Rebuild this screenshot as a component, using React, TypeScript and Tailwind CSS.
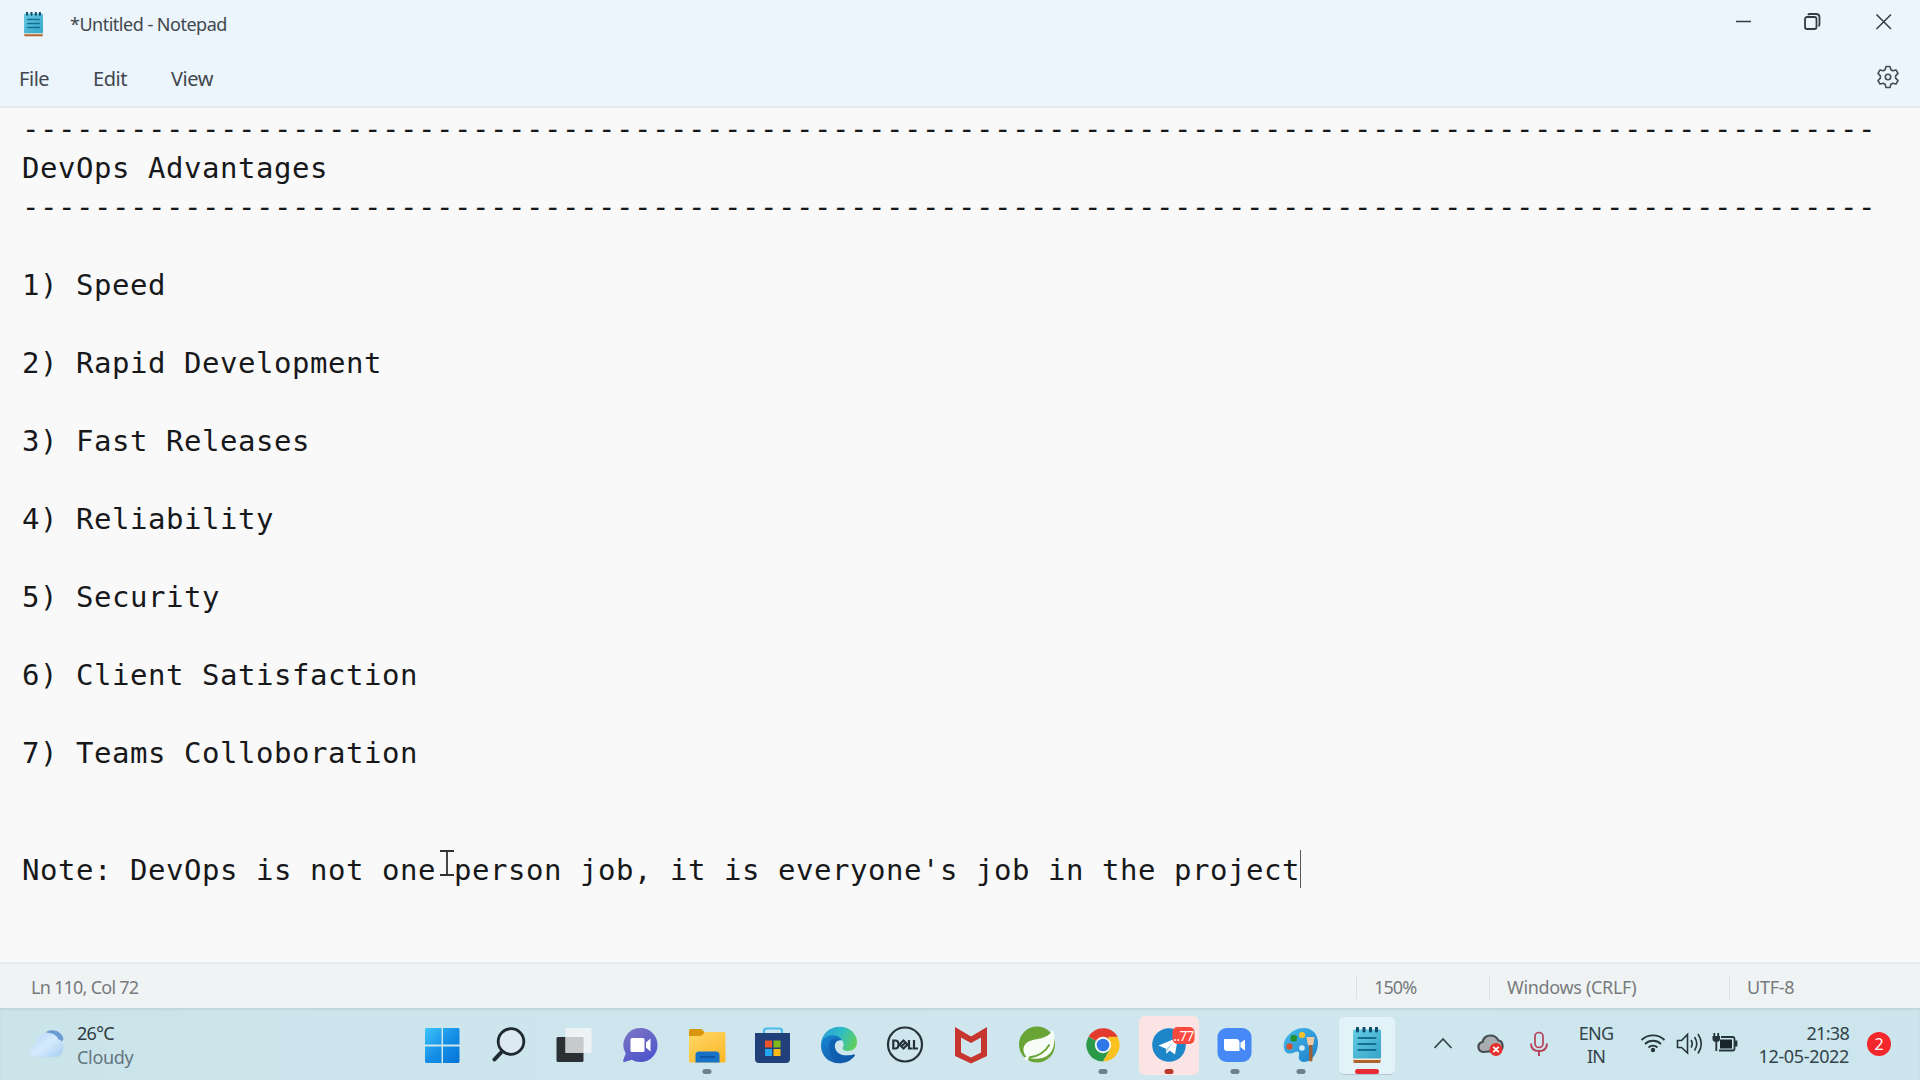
import type { ReactNode } from "react";

const RULE = "-".repeat(103);

const LINES = [
  RULE,
  "DevOps Advantages",
  RULE,
  "",
  "1) Speed",
  "",
  "2) Rapid Development",
  "",
  "3) Fast Releases",
  "",
  "4) Reliability",
  "",
  "5) Security",
  "",
  "6) Client Satisfaction",
  "",
  "7) Teams Colloboration",
  "",
  "",
];

function NotepadGlyph({ className }: { className: string }) {
  return (
    <svg className={className} viewBox="0 0 28 37">
      <rect x="0.5" y="31" width="27" height="5" rx="1" fill="#b0622c" />
      <rect x="0.5" y="31" width="27" height="2" fill="#f3ead8" />
      <rect x="0" y="2.5" width="28" height="29" rx="1.5" fill="url(#np)" />
      <path d="M5.5 11h17M5.5 17h17M5.5 23h17" stroke="#156f93" strokeWidth="2.2" strokeLinecap="round" />
      <path d="M4.5 1v3M11 1v3M17.500 1v3M23.500 1v3" stroke="#0e4b66" strokeWidth="3" strokeLinecap="round" />
      <defs>
        <linearGradient id="np" x1="0" y1="0" x2="1" y2="1">
          <stop offset="0" stopColor="#66cbe2" />
          <stop offset="1" stopColor="#35a5c9" />
        </linearGradient>
      </defs>
    </svg>
  );
}

function TaskIcon({ children, dot }: { children: ReactNode; dot?: string }) {
  return (
    <svg className="h-[72px] w-[66px] shrink-0" viewBox="0 0 66 72">
      {children}
      {dot && <rect x="28.500" y="61" width="9" height="5" rx="2.500" fill={dot} />}
    </svg>
  );
}

function TaskbarIcons() {
  return (
    <>
      <TaskIcon>
        <defs>
          <linearGradient id="win" gradientUnits="userSpaceOnUse" x1="15" y1="20" x2="50" y2="55">
            <stop offset="0" stopColor="#3fc4fb" />
            <stop offset="0.5" stopColor="#1590e6" />
            <stop offset="1" stopColor="#0573d6" />
          </linearGradient>
        </defs>
        <path d="M16 20h15.500v16.500H15V21zM33 20h15.500l1 1v15.500H33zM15 38.500h16.500V55H16l-1-1zM33 38.500h16.500V54l-1 1H33z" fill="url(#win)" />
      </TaskIcon>
      <TaskIcon>
        <circle cx="35" cy="33.500" r="12.800" fill="#dce9f2" stroke="#1f2a30" strokeWidth="2.800" />
        <path d="M26 43.500L18.500 51.500" stroke="#1f2a30" strokeWidth="4" strokeLinecap="round" />
      </TaskIcon>
      <TaskIcon>
        <rect x="14.500" y="29" width="27" height="25" rx="1.500" fill="#2b3034" />
        <rect x="23.500" y="20" width="26" height="25" rx="1.500" fill="#f1f3f5" opacity="0.9" />
        <path d="M23.500 29h18v16h-18z" fill="#c8c9cb" />
      </TaskIcon>
      <TaskIcon>
        <defs>
          <linearGradient id="chat" x1="0" y1="0" x2="0.600" y2="1">
            <stop offset="0" stopColor="#8077c4" />
            <stop offset="1" stopColor="#4f56cb" />
          </linearGradient>
        </defs>
        <path d="M32.500 20c9.500 0 17 7.500 17 17s-7.500 17-17 17c-3.500 0-6-.8-8.500-2.200L16.500 54c-1.200.2-1.800-.8-1.200-2l2.400-6.500A17 17 0 0 1 32.500 20z" fill="url(#chat)" />
        <rect x="22.500" y="30" width="14" height="14" rx="1.500" fill="#fff" />
        <path d="M38 34.500l4.500-4v13l-4.500-4z" fill="#fff" />
      </TaskIcon>
      <TaskIcon dot="#6f818a">
        <defs>
          <linearGradient id="fold" x1="0" y1="0" x2="0.700" y2="1">
            <stop offset="0" stopColor="#ffd868" />
            <stop offset="1" stopColor="#fbba2d" />
          </linearGradient>
        </defs>
        <path d="M15 22.500q0-1.500 1.500-1.500h11l3 3v9H15z" fill="#d9960f" />
        <path d="M15 28h12l4.500-4H50q1.500 0 1.500 1.500V53q0 1.500-1.500 1.500H16.500q-1.500 0-1.500-1.500z" fill="url(#fold)" />
        <path d="M21.500 54.500V47q0-3.500 3.500-3.500h17q3.500 0 3.500 3.500v7.500z" fill="#1673c9" />
        <path d="M26 49h15" stroke="#0c57a5" strokeWidth="2" />
      </TaskIcon>
      <TaskIcon>
        <path d="M24 27v-4q0-2.500 2.500-2.500h13Q42 20.500 42 23v4" fill="none" stroke="#4ab9ed" strokeWidth="2.200" />
        <path d="M15 25h35v26q0 4-4 4H19q-4 0-4-4z" fill="#213f78" />
        <path d="M25 32.500h7v7h-7z" fill="#f05329" />
        <path d="M33.500 32.500h7v7h-7z" fill="#7fba16" />
        <path d="M25 41h7v7h-7z" fill="#23a6f0" />
        <path d="M33.500 41h7v7h-7z" fill="#fdb913" />
      </TaskIcon>
      <TaskIcon>
        <defs>
          <linearGradient id="edgeTop" x1="0" y1="0.300" x2="1" y2="0.600">
            <stop offset="0" stopColor="#2a9fd8" />
            <stop offset="0.500" stopColor="#2fbcc5" />
            <stop offset="1" stopColor="#61d15b" />
          </linearGradient>
          <linearGradient id="edgeLow" x1="0" y1="0" x2="1" y2="1">
            <stop offset="0" stopColor="#1687d4" />
            <stop offset="1" stopColor="#134f9c" />
          </linearGradient>
        </defs>
        <path d="M15 36.500C15 27 23 18.800 33.500 18.800 44 18.800 51 26 51 34c0 6-4 9-9 9-4 0-6-1.500-5-4 2-4-1-9-7-10-7-1-13 2-15 7.500z" fill="url(#edgeTop)" />
        <path d="M15 37c1-7 7-10.500 13.500-9.500 4.500.7 7.500 3.500 7.500 5-5-1-8 2.500-7 7.500 1.200 6 9 9.500 19 6.500 1-.3 1.300.5.8 1.300C45 53 39.500 55.300 33 55.300 22.500 55.300 14.500 47 15 37z" fill="url(#edgeLow)" />
        <path d="M23 38c0-6 5-9 11-6-4 0-6 4-5 8 1.200 6 9 9.500 19 6.500C43 53 37 54 33 54c-6-2-10-9-10-16z" fill="#0f5cae" opacity="0.750" />
      </TaskIcon>
      <TaskIcon>
        <circle cx="33" cy="36.500" r="17" fill="none" stroke="#26323a" strokeWidth="2.200" />
        <g fill="none" stroke="#26323a" strokeWidth="2.200">
          <path d="M21.300 32.500v8h2q3.200 0 3.200-4t-3.200-4z" />
          <path d="M27.500 36.500l4-4 4 4-4 4zM29.500 38l4.500-3.500" />
          <path d="M37 32v8.500h3.500M42 32v8.500h4" />
        </g>
      </TaskIcon>
      <TaskIcon>
        <path d="M17 19l16 9.500L49 19v29l-16 7.500L17 48z" fill="#c7352f" />
        <path d="M23 29.500l10 5.500 10-5.500v15L33 49.500l-10-5z" fill="#cfe6ee" />
      </TaskIcon>
      <TaskIcon>
        <circle cx="33" cy="36.500" r="18" fill="#69a436" />
        <path d="M49 21.500c2.500 10 2 21-5.500 26-6 4.500-14 3.500-20.500 2-4-4-5.500-11 0-15 7-5 20-1.500 26-13z" fill="#f7fcf7" />
        <path d="M25 49.500c9-1 16-5 20.500-13" fill="none" stroke="#69a436" strokeWidth="1.800" />
        <circle cx="22.500" cy="50.500" r="2" fill="#f7fcf7" />
      </TaskIcon>
      <TaskIcon dot="#6f818a">
        <path d="M33 37L18.700 28.500A16.600 16.600 0 0 1 47.400 28.500z" fill="#e33b2e" />
        <path d="M33 20.400A16.600 16.600 0 0 1 47.400 28.700H33z" fill="#e33b2e" />
        <path d="M18.600 28.700A16.600 16.600 0 0 0 33 53.600L40.200 41.200 33 37z" fill="#2a9a4a" />
        <path d="M47.400 28.700A16.600 16.600 0 0 1 33 53.600L40.200 41 38 28.700z" fill="#fbc120" />
        <circle cx="33" cy="37" r="8.200" fill="#f4f7fb" />
        <circle cx="33" cy="37" r="6.300" fill="#2f77e8" />
      </TaskIcon>
      <TaskIcon>
        <rect x="3" y="8" width="60" height="59" rx="6" fill="#fbe4e3" />
        <circle cx="33" cy="37" r="16.800" fill="#1d86c8" />
        <path d="M22.500 37.500L42 29.500l-3 17-5.500-4-3 3.200-.5-5z" fill="#fff" />
        <path d="M30 41l8-7.500-6 8.500-1.500 3.200z" fill="#b8d6ea" />
        <rect x="36.500" y="19" width="22" height="17" rx="5" fill="#f94a3f" />
        <text x="47.500" y="32.500" textAnchor="middle" fill="#fff" fontSize="13.500" fontFamily="Noto Sans, sans-serif" letterSpacing="-0.600">..77</text>
        <rect x="28.500" y="61" width="9" height="5" rx="2.500" fill="#ba3a2b" />
      </TaskIcon>
      <TaskIcon dot="#6f818a">
        <rect x="15.500" y="20" width="34" height="34" rx="9" fill="#4688f5" />
        <path d="M22 31h12q3.500 0 3.500 3.500V43H25q-3 0-3-3z" fill="#fff" />
        <path d="M38.500 34.800l4.500-3.300v11l-4.500-3.300z" fill="#fff" />
      </TaskIcon>
      <TaskIcon dot="#6f818a">
        <defs>
          <linearGradient id="pal" x1="0" y1="0" x2="1" y2="1">
            <stop offset="0" stopColor="#45bdea" />
            <stop offset="1" stopColor="#1d7fcb" />
          </linearGradient>
        </defs>
        <path d="M36 20c9 0 14 7 14 15s-5 19-14 19c-4 0-6-3-5-7 .6-3-1-4.500-4-3-4 2-8 2.500-10-1-5-10 6-23 19-23z" fill="url(#pal)" />
        <circle cx="34" cy="40" r="2.800" fill="#d5edf7" />
        <rect x="18.500" y="35.500" width="6" height="6" rx="2" fill="#d6512c" />
        <rect x="22.500" y="27" width="6.500" height="6.500" rx="2.500" fill="#23902c" />
        <rect x="31" y="24" width="6" height="6" rx="2.500" fill="#f2c12e" />
        <path d="M38.500 29h8l-1 6.500-1.500 3h-3l-1.500-3z" fill="#ecc9a2" />
        <path d="M41 37h3.500v15q-1.700 3.500-3.500 0z" fill="#9b6234" />
      </TaskIcon>
    </>
  );
}

export default function App() {
  return (
    <div className="flex h-[1080px] w-[1920px] flex-col overflow-hidden bg-[#f9f9fa] font-['Noto_Sans',sans-serif]">
      <header className="flex h-[108px] shrink-0 flex-col border-b-2 border-[#e2e9f1] bg-[#ecf4fc] text-[#41474d]">
        <div className="flex h-[48px] items-center pl-[24px] pr-[28px]">
          <NotepadGlyph className="h-[25px] w-[19px]" />
          <span className="ml-[27px] text-[18px] leading-6 tracking-[-0.5px]">*Untitled - Notepad</span>
          <svg className="mb-1 ml-auto h-[18px] w-[156px]" viewBox="0 0 156 18" fill="none" stroke="#343b42" strokeWidth="1.5">
            <path d="M0 8.500h15" />
            <rect x="69" y="4" width="11.500" height="12" rx="2" strokeWidth="1.800" />
            <path d="M72 2q.5-1 2-1h6q3.500 0 3.500 3.500V11q0 1.500-1 2.200" strokeWidth="1.800" />
            <path d="M140.500 1.500l14.500 14.500M155 1.500L140.500 16" />
          </svg>
        </div>
        <div className="flex h-[58px] items-center pl-[19px] pr-[21px] text-[20px] tracking-[-0.45px]">
          <span className="w-[74px] pt-[3px]">File</span>
          <span className="w-[78px] pt-[3px]">Edit</span>
          <span className="pt-[3px]">View</span>
          <svg className="ml-auto h-[24px] w-[22px]" viewBox="0 0 22 24" fill="none" stroke="#454c53" strokeWidth="1.600" strokeLinejoin="round">
            <path d="M9 1.500h4l.9 3.300 1.800 1 3.300-.9 2 3.500-2.400 2.500v2.200l2.400 2.500-2 3.500-3.300-.9-1.800 1-.9 3.300H9l-.9-3.300-1.800-1-3.300.9-2-3.500 2.400-2.500v-2.200L1 8.400l2-3.500 3.300.9 1.800-1z" />
            <circle cx="11" cy="12" r="2.700" />
          </svg>
        </div>
      </header>

      <main className="relative grow pl-[22px] pt-[2px] font-['DejaVu_Sans_Mono',monospace] text-[29px] leading-[39px] tracking-[0.541px] whitespace-pre text-[#17181a]">
        {LINES.map((line, i) => (
          <div key={i} className="h-[39px]">{line}</div>
        ))}
        <div className="flex h-[39px] items-start">
          <span>Note: DevOps is not one person job, it is everyone's job in the project</span>
          <span className="-mt-px h-[38px] w-px bg-[#55595c]" />
        </div>
        <svg className="absolute left-[440px] top-[742px] h-[26px] w-[14px]" viewBox="0 0 14 26" fill="none" stroke="#303234" strokeWidth="1.800">
          <path d="M0 1h14M0 25h14M7 1v24" />
        </svg>
      </main>

      <footer className="flex h-[46px] shrink-0 items-center border-t-2 border-[#e7eaec] bg-[#f0f3f4] pl-[31px] pt-[2px] text-[18px] text-[#777b7d]">
        <span className="w-[1325px] tracking-[-0.75px]">Ln 110, Col 72</span>
        <span className="flex h-[24px] w-[133px] items-center border-l border-[#dde1e2] pl-[17px] tracking-[-0.9px]">150%</span>
        <span className="flex h-[24px] w-[240px] items-center border-l border-[#dde1e2] pl-[17px] tracking-[-0.33px]">Windows (CRLF)</span>
        <span className="flex h-[24px] items-center border-l border-[#dde1e2] pl-[17px] tracking-[-0.25px]">UTF-8</span>
      </footer>

      <div className="flex h-[72px] shrink-0 items-center bg-linear-to-r from-[#cbe4ea] via-[#cfe6ef] to-[#cde6ed] shadow-[inset_0_2px_2px_#bfd6dc]">
        <div className="flex w-[410px] items-center pl-[29px]">
          <svg className="h-[30px] w-[36px]" viewBox="0 0 36 30">
            <defs>
              <linearGradient id="cl" x1="0" y1="0" x2="1" y2="1">
                <stop offset="0" stopColor="#b5d5f8" />
                <stop offset="0.500" stopColor="#d5eafd" />
                <stop offset="1" stopColor="#a5ccf1" />
              </linearGradient>
            </defs>
            <path d="M17 3c6-4 16-1 17.500 7L31 16z" fill="#6b9bd2" />
            <path d="M8 28c-8 0-9-10-1-12C8 8 14 3 20 4c5 .5 8 3 9.500 6.500C36 11 37 27 27 28z" fill="url(#cl)" />
          </svg>
          <div className="ml-[12px] pt-[2px] text-[18px] leading-[24px] tracking-[-0.3px]">
            <div className="tracking-[-0.7px] text-[#2d3a40]">26°C</div>
            <div className="text-[#64767f]">Cloudy</div>
          </div>
        </div>

        <TaskbarIcons />

        <div className="flex h-[72px] w-[66px] flex-col items-center pt-[9px]">
          <div className="flex h-[58px] w-[56px] flex-col items-center rounded-[5px] border-b border-[#b5c8d2] bg-[#e3f1f8] pt-[10px]">
            <NotepadGlyph className="h-[37px] w-[28px]" />
            <span className="mt-[5px] h-[5px] w-[24px] rounded-full bg-[#e92b36]" />
          </div>
        </div>

        <svg className="ml-[34px] h-[40px] w-[116px]" viewBox="1434 1024 116 40" fill="none">
          <path d="M1434.500 1048l8.500-9 8.500 9" stroke="#3a474d" strokeWidth="1.800" />
          <path d="M1483 1052c-6-1-6-9-.5-10 1-4 4-6.500 8-6.500 4 0 6.500 2 8 5 5 .5 5 8 2 10z" fill="#a9adaf" stroke="#454c50" strokeWidth="2.200" />
          <circle cx="1496" cy="1049.500" r="6.500" fill="#e5302c" />
          <path d="M1493.300 1046.800l5.400 5.400M1498.700 1046.800l-5.400 5.400" stroke="#fff" strokeWidth="1.800" />
          <rect x="1535" y="1032.500" width="8" height="15" rx="4" stroke="#b63f57" strokeWidth="1.700" />
          <path d="M1531 1043.500q0 7.500 8 7.500t8-7.500M1539 1051v5" stroke="#b63f57" strokeWidth="1.900" />
        </svg>
        <div className="ml-[21px] w-[50px] pt-px text-center text-[18px] leading-[23px] tracking-[-0.8px] text-[#33434a]">
          <div>ENG</div>
          <div>IN</div>
        </div>
        <svg className="ml-[19px] h-[40px] w-[100px]" viewBox="1640 1024 100 40" fill="none" stroke="#26353c" strokeWidth="1.800">
          <path d="M1641.500 1040a16.500 16.500 0 0 1 23 0M1645 1044a11.500 11.500 0 0 1 16 0M1648.500 1047.500a6.500 6.500 0 0 1 9 0" />
          <circle cx="1653" cy="1050" r="2.200" fill="#26353c" stroke="none" />
          <path d="M1677.500 1040.500h4l6-6v18.500l-6-5.500h-4zM1691 1040q2.500 3.800 0 7.500M1694.500 1037q4.500 6.800 0 13.500M1698 1034q6.500 9.800 0 19.500" strokeWidth="1.600" />
          <path d="M1721 1037h11.500q2 0 2 2v9.500q0 2-2 2H1719" />
          <path d="M1720 1039.500h12v9h-12z" fill="#17242a" stroke="none" />
          <path d="M1734 1041.500h2.500v4h-2.500" fill="#26353c" />
          <path d="M1712.500 1036h7.500v3q0 3-3.700 3t-3.800-3z" fill="#26353c" stroke="none" />
          <path d="M1714.300 1033v4M1718.200 1033v4M1716.300 1041v10" />
        </svg>
        <div className="w-[109px] pt-px text-right text-[18px] leading-[23px] tracking-[-0.35px] text-[#33434a]">
          <div className="tracking-[-0.7px]">21:38</div>
          <div>12-05-2022</div>
        </div>
        <div className="ml-[18px] flex size-[24px] items-center justify-center rounded-full bg-[#f4272b] text-[16px] text-white">2</div>
      </div>
    </div>
  );
}
